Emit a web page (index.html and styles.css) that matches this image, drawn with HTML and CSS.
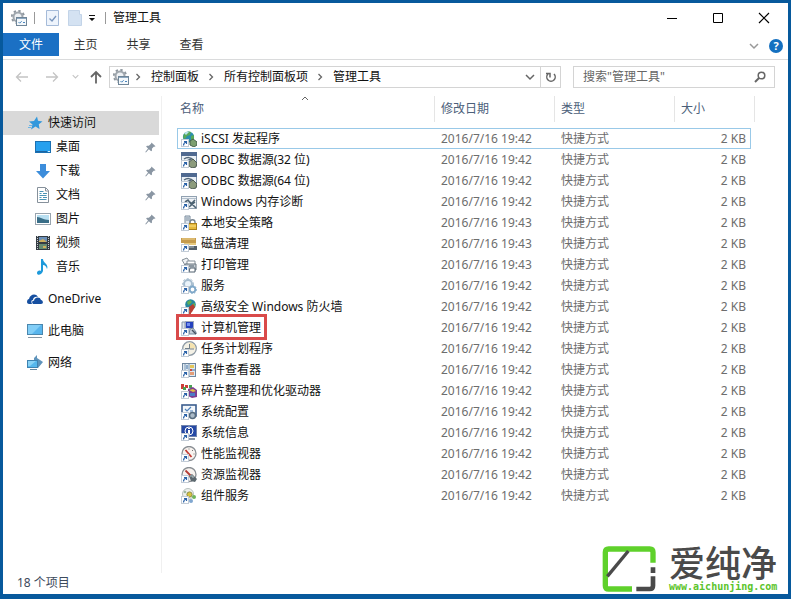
FILE: index.html
```html
<!DOCTYPE html>
<html lang="zh-CN">
<head>
  <meta charset="UTF-8">
  <title>管理工具</title>
  <link rel="stylesheet" href="styles.css">
</head>
<body>
  <!-- icon sprite -->
  <svg class="sprite" aria-hidden="true">
    <symbol id="shortcut" viewBox="0 0 16 16">
      <rect x="0.5" y="8.5" width="7" height="7" fill="#fff" stroke="#c3ccd6"/>
      <path d="M2.5 14.5c0-2 .7-3 2.800-3.800M3 10.500h2.500V13" fill="none" stroke="#2a62a8" stroke-width="1.200"/>
    </symbol>
    <symbol id="gear-box" viewBox="0 0 16 16">
      <circle cx="7" cy="7" r="4.500" fill="#eef1f4" stroke="#a0a7ae" stroke-width="2"/>
      <circle cx="7" cy="7" r="6.200" fill="none" stroke="#8f979f" stroke-width="1.800" stroke-dasharray="2.400 2.400"/>
      <rect x="5.500" y="7.500" width="10" height="8" fill="#f4f8fb" stroke="#6f8598"/>
      <path d="M6 8.500h9" stroke="#8da8c0"/>
      <path d="M7.500 12l1.200 1.200 2-2M12 12.500h2" fill="none" stroke="#4b86bd"/>
    </symbol>
    <symbol id="iscsi" viewBox="0 0 16 16">
      <circle cx="7.5" cy="6" r="5.6" fill="#2b8fae"/>
      <path d="M3 3c2-3 6-3 7-2L9 4 6 5 4 8 2 7zM10 5l3-1v4l-3 2z" fill="#57a957"/>
      <path d="M3 2c2-1.500 4-1.500 5-1L5 4z" fill="#b9e3ea"/>
      <path d="M9 10l3-2 4 3v3l-3 2-4-2z" fill="#7d9f70" stroke="#47614b"/>
      <use href="#shortcut"/>
    </symbol>
    <symbol id="odbc" viewBox="0 0 16 16">
      <rect x="0.5" y="0.5" width="15" height="13" fill="#eaf0f6" stroke="#7e91a8"/>
      <path d="M0 0h16v4H0z" fill="#4f6990"/>
      <path d="M3 7c3-2 7-2 9 1M6 9l4-2" fill="none" stroke="#536779" stroke-width="1.5"/>
      <path d="M8 10l4-3 4 4-1 4-4 1-3-2z" fill="#8c9b7c" stroke="#4e5c53"/>
      <use href="#shortcut"/>
    </symbol>
    <symbol id="memory" viewBox="0 0 16 16">
      <rect x="0.5" y="2.5" width="15" height="12" fill="#eef2f6" stroke="#91a1b1"/>
      <path d="M1 4.500h14" stroke="#b3c0cd"/>
      <path d="M4 8l3-2 3 4 4-4M8 13l6-5M9 8l6 6" fill="none" stroke="#4c6272" stroke-width="1.6"/>
      <use href="#shortcut"/>
    </symbol>
    <symbol id="security" viewBox="0 0 16 16">
      <path d="M4 1h5v8H4z" fill="#dfe7ee" stroke="#7a8c9d"/>
      <path d="M5 3h3M5 5h3" stroke="#7a8c9d"/>
      <path d="M9 9V7c0-3 5-3 5 0v2" fill="none" stroke="#75838f" stroke-width="1.4"/>
      <rect x="7.5" y="8.5" width="8" height="6" fill="#e5b93c" stroke="#a9801c"/>
      <path d="M8 11h7" stroke="#f9df83"/>
      <use href="#shortcut"/>
    </symbol>
    <symbol id="cleanup" viewBox="0 0 16 16">
      <path d="M0 2h15v5H0z" fill="#c59b4d"/>
      <path d="M1 3h13" stroke="#f1d590"/>
      <path d="M3 7h12v2H3z" fill="#e7c97f"/>
      <path d="M7 10h9v4H7z" fill="#55606b"/>
      <path d="M8 11h5" stroke="#b6c0c8"/>
      <use href="#shortcut"/>
    </symbol>
    <symbol id="print" viewBox="0 0 16 16">
      <path d="M1 3l5-2 3 4-5 3z" fill="#f1f3f5" stroke="#858f98"/>
      <path d="M6 4h8v4H6z" fill="#fff" stroke="#858f98"/>
      <path d="M4 7h11v6H4z" fill="#c7ced4" stroke="#68747f"/>
      <path d="M8 9h5M9 11h5v4H8z" fill="#fff" stroke="#51606e"/>
      <use href="#shortcut"/>
    </symbol>
    <symbol id="services" viewBox="0 0 16 16">
      <circle cx="7" cy="6" r="4" fill="#eaf3fa" stroke="#a6bdcf" stroke-width="2"/>
      <circle cx="7" cy="6" r="5.5" fill="none" stroke="#a6bdcf" stroke-dasharray="2 2"/>
      <circle cx="11.5" cy="11.5" r="2.8" fill="#fff" stroke="#7fa8c9" stroke-width="1.8"/>
      <circle cx="11.5" cy="11.5" r="4" fill="none" stroke="#7fa8c9" stroke-dasharray="1.5 1.5"/>
      <use href="#shortcut"/>
    </symbol>
    <symbol id="firewall" viewBox="0 0 16 16">
      <path d="M1 8h9v7H1z" fill="#b9573e"/>
      <path d="M1 10h9M1 12h9" stroke="#e4a88e"/>
      <circle cx="9.5" cy="5.5" r="5.3" fill="#2687a0"/>
      <path d="M6 3l3-2 2 2-2 2-2 1zM11 5l3-1v4l-2 1z" fill="#63ae55"/>
      <path d="M8 8l4-3 2 3-3 5-2 2z" fill="#b93f34"/>
      <use href="#shortcut"/>
    </symbol>
    <symbol id="computer-mgmt" viewBox="0 0 16 16">
      <path d="M1 2h3v8H1z" fill="#dde5ee" stroke="#8999ab"/>
      <rect x="4.5" y="1.5" width="8" height="7" fill="#2541bd" stroke="#9faabd"/>
      <path d="M6 3h3v3H6z" fill="#728ef0"/>
      <path d="M9 9l3-1 3 4v2H8z" fill="#c4ced8" stroke="#758899"/>
      <path d="M11 10l4 4" stroke="#445261" stroke-width="1.5"/>
      <use href="#shortcut"/>
    </symbol>
    <symbol id="task" viewBox="0 0 16 16">
      <circle cx="8.5" cy="7.5" r="6.8" fill="#f4f1e6" stroke="#8e9aa5" stroke-width="1.3"/>
      <path d="M8.5 7.5v-6a6 6 0 0 1 6 6z" fill="#f5e3b0"/>
      <path d="M8.500 3v5H13M4 7.500h4.500" fill="none" stroke="#73808c"/>
      <use href="#shortcut"/>
    </symbol>
    <symbol id="event" viewBox="0 0 16 16">
      <rect x="1.5" y="1.5" width="13" height="13" fill="#e1ebf4" stroke="#6f87a0"/>
      <path d="M4 2v11M8 2v12" stroke="#7e9ab5"/>
      <path d="M9 3h4v3H9z" fill="#e2c65b"/>
      <path d="M9 7h2v2H9z" fill="#c94b46"/>
      <path d="M9 10h4v3H9z" fill="#e39d78"/>
      <path d="M5 4h2M5 6h2M11 8h3" stroke="#3c6ea2"/>
      <use href="#shortcut"/>
    </symbol>
    <symbol id="defrag" viewBox="0 0 16 16">
      <path d="M0 1h3v5H0zM4 2h3v3H4z" fill="#cc3d38"/>
      <path d="M2 4h3v3H2z" fill="#4aa052"/>
      <path d="M8 2h3v3H8z" fill="#4aa052"/>
      <path d="M7 6l5-2 4 3v7l-5 1-4-2z" fill="#7d3e91"/>
      <path d="M8 7l4-1 3 2-3 1z" fill="#e4bd45"/>
      <path d="M9 10h5v3H9z" fill="#4c7cc5"/>
      <use href="#shortcut"/>
    </symbol>
    <symbol id="config" viewBox="0 0 16 16">
      <rect x="1" y="1" width="14" height="11" fill="#f3f7fb" stroke="#3b5d8e" stroke-width="1.6"/>
      <path d="M4 5l2 2 4-4M9 7h3" fill="none" stroke="#4f82bb" stroke-width="1.2"/>
      <circle cx="11.5" cy="11.5" r="3" fill="#aabac8" stroke="#566b7e" stroke-width="1.5"/>
      <use href="#shortcut"/>
    </symbol>
    <symbol id="info" viewBox="0 0 16 16">
      <rect x="0.5" y="0.5" width="15" height="11" fill="#2549a5" stroke="#7184ad"/>
      <circle cx="8" cy="6" r="4" fill="none" stroke="#fff"/>
      <path d="M8 3v1M8 5v4" stroke="#fff" stroke-width="2"/>
      <path d="M8 14h6" stroke="#8592a2" stroke-width="2"/>
      <use href="#shortcut"/>
    </symbol>
    <symbol id="perf" viewBox="0 0 16 16">
      <circle cx="8" cy="7.5" r="7" fill="#f8f3ef" stroke="#898e93" stroke-width="1.3"/>
      <path d="M4.500 4l6 7" stroke="#c33b34" stroke-width="1.8"/>
      <path d="M8 2.500v1M12 4l-1 1M13.500 8h-1" stroke="#777"/>
      <use href="#shortcut"/>
    </symbol>
    <symbol id="resource" viewBox="0 0 16 16">
      <circle cx="8" cy="7.5" r="7" fill="#f8f3ef" stroke="#898e93" stroke-width="1.3"/>
      <path d="M4.500 3.500l6 6" stroke="#b63c35" stroke-width="1.8"/>
      <path d="M8 9l3-2 5 5-2 3-4-1z" fill="#5c686f"/>
      <path d="M9 9h3v2" fill="none" stroke="#b6c4c6"/>
      <use href="#shortcut"/>
    </symbol>
    <symbol id="component" viewBox="0 0 16 16">
      <circle cx="7" cy="6" r="5.5" fill="#edf0ed" stroke="#b8c0bf"/>
      <circle cx="8.5" cy="6.5" r="2.6" fill="#d8c441" stroke="#8e8c46"/>
      <circle cx="13" cy="9" r="2" fill="#70b55b"/>
      <circle cx="10" cy="13" r="2" fill="#80a7d0"/>
      <circle cx="4" cy="4" r="1.3" fill="#9fb9a2"/>
      <use href="#shortcut"/>
    </symbol>
    <symbol id="pin" viewBox="0 0 12 12">
      <path d="M7 .5l4.500 4-1.200.8-.8-.2L7.500 7.300l.2 2-1 .8-2.500-2.300L1 11.500l-.7-.6L3.300 7 1.200 5l1-1h2l2.400-2.200z" fill="#8a96a3"/>
    </symbol>
    <symbol id="chevron" viewBox="0 0 10 10">
      <path d="M3.500 2l3 3-3 3" fill="none" stroke="#666" stroke-width="1.3"/>
    </symbol>
    <symbol id="chevron-down" viewBox="0 0 10 10">
      <path d="M1 3l4 4 4-4" fill="none" stroke="currentColor" stroke-width="1.5"/>
    </symbol>
  </svg>

  <header class="titlebar">
    <svg class="icon"><use href="#gear-box"/></svg>
    <span class="bar"></span>
    <button class="quick" aria-label="属性">
      <svg width="14" height="16" viewBox="0 0 14 16"><path d="M.5.5h12v15H.5z" fill="#eef4fc" stroke="#a5bbd9"/><path d="M3.500 8.500L6 11l4-5" fill="none" stroke="#7895bd" stroke-width="1.3"/></svg>
    </button>
    <button class="quick" aria-label="新建文件夹">
      <svg width="14" height="16" viewBox="0 0 14 16"><path d="M.5.5h11v4h2v11H.5z" fill="#d4e2f2" stroke="#c3d4e8"/></svg>
    </button>
    <button class="quick customize" aria-label="自定义快速访问工具栏">
      <svg width="8" height="8" viewBox="0 0 8 8"><path d="M1 1h6v1H1zM1 4h6L4 7z" fill="#111"/></svg>
    </button>
    <span class="bar"></span>
    <h1>管理工具</h1>
    <div class="window-buttons">
      <button aria-label="最小化"><svg width="12" height="12"><path d="M1 6.500h10" stroke="#000"/></svg></button>
      <button aria-label="最大化"><svg width="12" height="12"><path d="M1.500 1.500h9v9h-9z" fill="none" stroke="#000"/></svg></button>
      <button aria-label="关闭"><svg width="12" height="12"><path d="M1 1l10 10M11 1L1 11" stroke="#000" stroke-width="1.2"/></svg></button>
    </div>
  </header>

  <nav class="ribbon">
    <button class="tab file">文件</button>
    <button class="tab">主页</button>
    <button class="tab">共享</button>
    <button class="tab">查看</button>
    <div class="ribbon-end">
      <button class="expand" aria-label="展开功能区"><svg width="10" height="10"><use href="#chevron-down"/></svg></button>
      <button class="help" aria-label="帮助">?</button>
    </div>
  </nav>

  <div class="toolbar">
    <div class="history">
      <button class="off" aria-label="后退"><svg width="14" height="14" viewBox="0 0 14 14"><path d="M13 7H2M6 2.500L1.500 7 6 11.500" fill="none" stroke="currentColor" stroke-width="1.3"/></svg></button>
      <button class="off" aria-label="前进"><svg width="14" height="14" viewBox="0 0 14 14"><path d="M1 7h11M8 2.500L12.500 7 8 11.500" fill="none" stroke="currentColor" stroke-width="1.3"/></svg></button>
      <button class="off recent" aria-label="最近浏览的位置"><svg width="7" height="7"><use href="#chevron-down"/></svg></button>
      <button class="up" aria-label="上移"><svg width="14" height="14" viewBox="0 0 14 14"><path d="M7 13.500V2M2 7l5-5 5 5" fill="none" stroke="currentColor" stroke-width="1.8"/></svg></button>
    </div>
    <div class="address">
      <svg class="icon"><use href="#gear-box"/></svg>
      <svg class="sep"><use href="#chevron"/></svg>
      <a href="#">控制面板</a>
      <svg class="sep"><use href="#chevron"/></svg>
      <a href="#">所有控制面板项</a>
      <svg class="sep"><use href="#chevron"/></svg>
      <a href="#">管理工具</a>
      <button class="drop" aria-label="以前的位置"><svg width="10" height="10"><use href="#chevron-down"/></svg></button>
      <button class="refresh" aria-label="刷新"><svg width="12" height="12" viewBox="0 0 12 12"><path d="M3 3a4.200 4.200 0 1 0 6 0M1 2.500h4v4" fill="none" stroke="#666" stroke-width="1.5"/></svg></button>
    </div>
    <div class="search">
      <input type="text" aria-label="搜索" placeholder='搜索"管理工具"'>
      <svg width="12" height="12" viewBox="0 0 12 12"><circle cx="7.5" cy="4.5" r="3.3" fill="none" stroke="#666" stroke-width="1.5"/><path d="M5 7l-4 4" stroke="#666" stroke-width="2"/></svg>
    </div>
  </div>

  <div class="content">
    <aside class="sidebar">
      <a href="#" class="root selected">
        <svg class="icon" viewBox="0 0 16 16"><path d="M10 1.500l1 4.300 4.500.7-3.700 2.700.7 4.800-4-2.500-4.500 3 1.500-5L2 6.500l5-.5z" fill="#3298dc"/><path d="M2 10.500h3M1 12.500h3" stroke="#6bb4e5"/></svg>
        快速访问</a>
      <a href="#" class="child">
        <svg class="icon" viewBox="0 0 16 16"><rect x=".5" y="2.500" width="15" height="11" fill="#27a0ee" stroke="#1b70b2"/><path d="M1 12.500h11" stroke="#1d64a0"/><path d="M13 12.500h2" stroke="#d6f1ff"/></svg>
        桌面<svg class="pin"><use href="#pin"/></svg></a>
      <a href="#" class="child">
        <svg class="icon" viewBox="0 0 16 16"><path d="M5 1h6v7h4l-7 7.500L1 8h4z" fill="#3c8ddb"/></svg>
        下载<svg class="pin"><use href="#pin"/></svg></a>
      <a href="#" class="child">
        <svg class="icon" viewBox="0 0 16 16"><path d="M2.500.5h8l3 3v12h-11z" fill="#fff" stroke="#86919b"/><path d="M10.500 1v3h3" fill="none" stroke="#86919b"/><path d="M4.500 4.500h4M4.500 6.500h2M8 6.500h4M4.500 8.500h7M4.500 10.500h2M8 10.500h4M4.500 12.500h7" stroke="#4a94b5"/></svg>
        文档<svg class="pin"><use href="#pin"/></svg></a>
      <a href="#" class="child">
        <svg class="icon" viewBox="0 0 16 16"><rect x=".5" y="2.500" width="15" height="11" fill="#fff" stroke="#98a4ae"/><path d="M2 4h12v8H2z" fill="#b8dff1"/><path d="M2 6c4 0 6 3 12 3v3H2z" fill="#396e88"/></svg>
        图片<svg class="pin"><use href="#pin"/></svg></a>
      <a href="#" class="child">
        <svg class="icon" viewBox="0 0 16 16"><path d="M1 1h14v14H1z" fill="#343c43"/><path d="M2.500 1v14M13.500 1v14" stroke="#c7ccd0" stroke-dasharray="1 1"/><path d="M4 2h8v5H4z" fill="#6b8fb8"/><path d="M4 9h8v5H4z" fill="#668c71"/><path d="M4 6l4-2 4 3H4zM8 11h3v2H8z" fill="#cdb05c"/></svg>
        视频</a>
      <a href="#" class="child">
        <svg class="icon" viewBox="0 0 16 16"><path d="M6 0h2c0 4 6 5 4 10-1-3-2-4-4-4v6c-1 4-6 5-6 2 0-2 2-3 4-2z" fill="#1d9adb"/></svg>
        音乐</a>
      <a href="#" class="root spaced">
        <svg class="icon" viewBox="0 0 16 16"><path d="M0 11c0-2 1-3 2-3 1-5 7-6 9-2-3-1-5 1-5 3-2 0-2 2-1 4H2c-1 0-2-1-2-2z" fill="#164fa0"/><path d="M6 13c-2-2 0-4 1-3 0-4 6-5 7-1 2 0 3 4 0 4z" fill="#164fa0"/></svg>
        OneDrive</a>
      <a href="#" class="root spaced">
        <svg class="icon" viewBox="0 0 16 16"><rect x=".5" y="1.500" width="15" height="10" fill="#58b5ed" stroke="#4a87ae"/><path d="M1 2h13L5 11H1z" fill="#82cef7"/><path d="M1 14.500h14" stroke="#8797a4"/></svg>
        此电脑</a>
      <a href="#" class="root spaced">
        <svg class="icon" viewBox="0 0 16 16"><path d="M7 3l3-3v3l6 4-5 6-4-5z" fill="#5f94bb"/><rect x=".5" y="5.500" width="10" height="7" fill="#55b7ec" stroke="#3f83b1"/><path d="M1 6h8l-6 5H1z" fill="#88d2f6"/><path d="M3 14.500h7" stroke="#6688a0"/></svg>
        网络</a>
    </aside>

    <main class="files">
      <table>
        <thead>
          <tr>
            <th class="col-name">名称<svg class="sort" width="8" height="6"><path d="M1 5l3-3 3 3" fill="none" stroke="#666"/></svg></th>
            <th class="col-date">修改日期</th>
            <th class="col-type">类型</th>
            <th class="col-size">大小</th>
          </tr>
        </thead>
        <tbody id="list"></tbody>
      </table>
    </main>
  </div>

  <footer class="status">18 个项目</footer>

  <div class="watermark">
    <svg width="54" height="46" viewBox="36 49 160 138" fill="none" stroke-width="16">
      <path d="M125 178H55q-10 0-10-10V68q0-10 10-10h123q10 0 10 10v31" stroke="#5fd12b"/>
      <path d="M51 140l63-76" stroke="#4a4a4a" stroke-width="10"/>
      <path d="M188 113v17M188 140v28q0 10-10 10h-40" stroke="#4a4a4a" stroke-width="14"/>
    </svg>
    <div class="brand">
      <strong>爱纯净</strong>
      <span>www.aichunjing.com</span>
    </div>
  </div>

  <script>
    const files = [
      { name: "iSCSI 发起程序", icon: "iscsi", date: "2016/7/16 19:42", state: "focused" },
      { name: "ODBC 数据源(32 位)", icon: "odbc", date: "2016/7/16 19:42" },
      { name: "ODBC 数据源(64 位)", icon: "odbc", date: "2016/7/16 19:42" },
      { name: "Windows 内存诊断", icon: "memory", date: "2016/7/16 19:42" },
      { name: "本地安全策略", icon: "security", date: "2016/7/16 19:43" },
      { name: "磁盘清理", icon: "cleanup", date: "2016/7/16 19:43" },
      { name: "打印管理", icon: "print", date: "2016/7/16 19:43" },
      { name: "服务", icon: "services", date: "2016/7/16 19:42" },
      { name: "高级安全 Windows 防火墙", icon: "firewall", date: "2016/7/16 19:42" },
      { name: "计算机管理", icon: "computer-mgmt", date: "2016/7/16 19:42", state: "marked" },
      { name: "任务计划程序", icon: "task", date: "2016/7/16 19:42" },
      { name: "事件查看器", icon: "event", date: "2016/7/16 19:42" },
      { name: "碎片整理和优化驱动器", icon: "defrag", date: "2016/7/16 19:42" },
      { name: "系统配置", icon: "config", date: "2016/7/16 19:42" },
      { name: "系统信息", icon: "info", date: "2016/7/16 19:42" },
      { name: "性能监视器", icon: "perf", date: "2016/7/16 19:42" },
      { name: "资源监视器", icon: "resource", date: "2016/7/16 19:42" },
      { name: "组件服务", icon: "component", date: "2016/7/16 19:42" }
    ];

    document.getElementById("list").innerHTML = files.map(file => `
      <tr class="${file.state || ""}">
        <td><div class="name"><svg class="icon"><use href="#${file.icon}"/></svg>${file.name}</div></td>
        <td>${file.date}</td>
        <td>快捷方式</td>
        <td class="size">2 KB</td>
      </tr>
    `).join("");
  </script>
</body>
</html>
```
FILE: styles.css
```css
* {
  box-sizing: border-box;
}

body {
  margin: 0;
  min-height: 100vh;
  display: flex;
  flex-direction: column;
  position: relative;
  border: 3px solid #07599c;
  border-bottom-width: 5px;
  background: #fff;
  color: #111;
  font-family: "Noto Sans", "Noto Sans CJK SC", sans-serif;
  font-size: 12px;
  line-height: 20px;
}

button {
  display: flex;
  align-items: center;
  justify-content: center;
  padding: 0;
  border: none;
  background: none;
  color: inherit;
  font: inherit;
}

a {
  color: inherit;
  text-decoration: none;
}

svg {
  display: block;
  flex: none;
}

.sprite {
  position: absolute;
  width: 0;
  height: 0;
}

.icon {
  width: 16px;
  height: 16px;
}

/* title bar */
.titlebar {
  display: flex;
  align-items: center;
  height: 30px;
  padding: 0 1px 0 8px;
}

.bar {
  width: 1px;
  height: 12px;
  margin: 0 7px;
  background: #999;
}

.quick {
  width: 22px;
}

.customize {
  width: 12px;
}

.titlebar h1 {
  margin: 0;
  font-size: 12px;
  font-weight: normal;
}

.window-buttons {
  display: flex;
  margin-left: auto;
}

.window-buttons button {
  width: 46px;
  height: 28px;
}

/* ribbon */
.ribbon {
  display: flex;
  height: 27px;
  border-bottom: 1px solid #dadbdc;
}

.tab {
  width: 53px;
  height: 23px;
  padding-top: 1px;
  color: #333;
}

.file {
  width: 56px;
  background: #1b70c4;
  color: #fff;
}

.ribbon-end {
  display: flex;
  align-items: center;
  gap: 10px;
  margin-left: auto;
  padding-right: 5px;
}

.expand {
  color: #999;
}

.help {
  width: 14px;
  height: 14px;
  border-radius: 50%;
  background: #1470c0;
  color: #fff;
  font-size: 11px;
  font-weight: bold;
  line-height: 14px;
}

/* address row */
.toolbar {
  display: flex;
  align-items: center;
  height: 33px;
  padding-right: 13px;
}

.history {
  display: flex;
  align-items: center;
  width: 106px;
  padding-left: 4px;
}

.history button {
  width: 30px;
}

.history .off {
  color: #c4c4c4;
}

.history .recent {
  width: 16px;
}

.history .up {
  width: 26px;
  color: #666;
}

.address {
  flex: 1;
  display: flex;
  align-items: center;
  height: 22px;
  padding-left: 3px;
  border: 1px solid #d4d4d4;
}

.sep {
  width: 10px;
  height: 10px;
  margin: 0 8px 0 7px;
}

.address .icon + .sep {
  margin-left: 4px;
}

.drop {
  width: 20px;
  margin-left: auto;
  color: #666;
}

.refresh {
  width: 20px;
  height: 20px;
  border-left: 1px solid #d4d4d4;
}

.search {
  display: flex;
  align-items: center;
  width: 202px;
  height: 22px;
  margin-left: 12px;
  padding: 0 8px 0 9px;
  border: 1px solid #d4d4d4;
}

.search input {
  flex: 1;
  min-width: 0;
  padding: 0;
  border: none;
  outline: none;
  background: none;
  font: inherit;
}

.search input::placeholder {
  color: #666;
}

/* sidebar */
.content {
  flex: 1;
  display: flex;
  padding-top: 3px;
}

.sidebar {
  width: 159px;
  padding-top: 15px;
  border-right: 1px solid #f0f0f0;
}

.sidebar a {
  display: flex;
  align-items: center;
  gap: 5px;
  height: 24px;
  margin-right: 2px;
}

.sidebar .root {
  padding-left: 24px;
}

.sidebar .child {
  padding-left: 32px;
}

.sidebar .selected {
  background: #d9d9d9;
}

.sidebar .spaced {
  margin-top: 8px;
}

.pin {
  width: 11px;
  height: 11px;
  margin: 0 3px 0 auto;
}

/* file list */
.files {
  flex: 1;
  padding: 0 37px 0 15px;
}

table {
  width: 100%;
  table-layout: fixed;
  border-collapse: separate;
  border-spacing: 0;
}

th {
  position: relative;
  height: 32px;
  padding: 0 0 7px 6px;
  color: #4c607a;
  font-weight: normal;
  text-align: left;
}

th::after {
  content: "";
  position: absolute;
  top: 0;
  right: 0;
  width: 1px;
  height: 26px;
  background: #e5e5e5;
}

th:last-child::after {
  right: -4px;
}

.col-name {
  padding-left: 3px;
}

.col-date,
.col-type {
  width: 120px;
}

.col-size {
  width: 76px;
}

.sort {
  position: absolute;
  top: -1px;
  left: 48%;
}

td {
  height: 21px;
  padding: 0 0 0 6px;
  border: 1px solid transparent;
  border-width: 1px 0;
  color: #6d6d6d;
  line-height: 19px;
}

td:first-child {
  padding-left: 3px;
  border-left-width: 1px;
  color: #111;
}

td:last-child {
  border-right-width: 1px;
}

td.size {
  padding: 0 4px 0 0;
  text-align: right;
}

.focused td {
  border-color: #99c9e8;
}

.name {
  display: flex;
  align-items: center;
  gap: 4px;
  position: relative;
  width: max-content;
  height: 19px;
}

.marked .name::after {
  content: "";
  position: absolute;
  top: -4px;
  right: -6px;
  bottom: -3px;
  left: -5px;
  border: 3px solid #d94a4a;
}

.status {
  padding: 0 0 1px 14px;
  color: #3c4a5c;
}

/* site mark over the lower right corner */
.watermark {
  position: absolute;
  right: -3px;
  bottom: -5px;
  display: flex;
  align-items: center;
  gap: 13px;
  width: 200px;
  height: 60px;
  padding-left: 11px;
  background: #fff;
}

.brand {
  display: flex;
  flex-direction: column;
  white-space: nowrap;
}

.brand strong {
  color: #4a4a4a;
  font-family: "Noto Sans CJK SC", sans-serif;
  font-size: 36px;
  font-weight: 500;
  line-height: 36px;
}

.brand span {
  color: #5cc42c;
  font-family: "DejaVu Sans Mono", monospace;
  font-size: 10px;
  font-weight: bold;
  line-height: 16px;
}
```
